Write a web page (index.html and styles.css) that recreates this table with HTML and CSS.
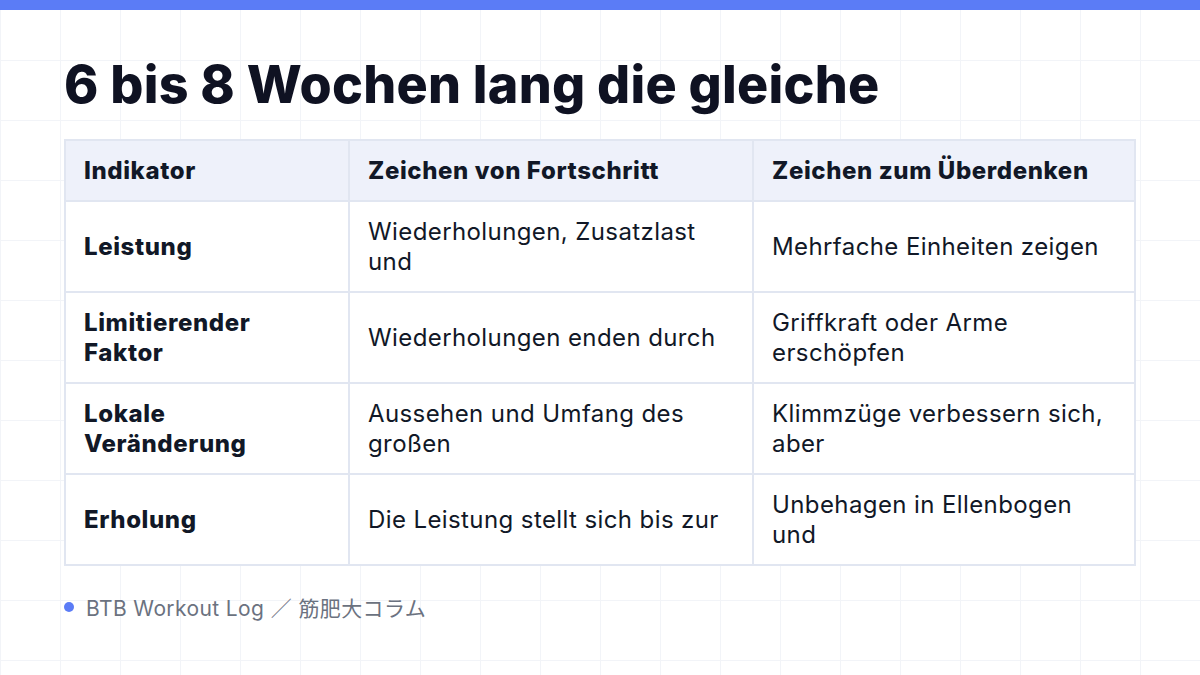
FILE: index.html
```html
<!DOCTYPE html>
<html lang="de">
<head>
<meta charset="utf-8">
<link rel="stylesheet" href="styles.css">
</head>
<body>
<div class="topbar"></div>
<main class="slide">
  <h1 class="title">6 bis 8 Wochen lang die gleiche</h1>
  <table class="grid-table">
    <colgroup>
      <col class="c1"><col class="c2"><col class="c3">
    </colgroup>
    <thead>
      <tr><th>Indikator</th><th>Zeichen von Fortschritt</th><th>Zeichen zum Überdenken</th></tr>
    </thead>
    <tbody>
      <tr><td class="key">Leistung</td><td>Wiederholungen, Zusatzlast und</td><td>Mehrfache Einheiten zeigen</td></tr>
      <tr><td class="key">Limitierender Faktor</td><td>Wiederholungen enden durch</td><td>Griffkraft oder Arme erschöpfen</td></tr>
      <tr><td class="key">Lokale Veränderung</td><td>Aussehen und Umfang des großen</td><td>Klimmzüge verbessern sich, aber</td></tr>
      <tr><td class="key">Erholung</td><td>Die Leistung stellt sich bis zur</td><td>Unbehagen in Ellenbogen und</td></tr>
    </tbody>
  </table>
  <footer class="source"><span class="dot"></span><span>BTB Workout Log ／ 筋肥大コラム</span></footer>
</main>
</body>
</html>
```
FILE: styles.css
```css
html, body {
  margin: 0;
  padding: 0;
}
body {
  width: 1200px;
  height: 675px;
  overflow: hidden;
  font-family: Inter, "Noto Sans CJK JP", sans-serif;
  color: #111827;
  background-color: #ffffff;
  background-image:
    linear-gradient(to right, #f2f4f8 1px, transparent 1px),
    linear-gradient(to bottom, #f2f4f8 1px, transparent 1px);
  background-size: 60px 60px;
  background-position: 0 0;
}
.topbar {
  height: 10px;
  background: #5b7cf6;
}
.slide {
  padding: 0 64px;
}
.title {
  margin: 0;
  padding-top: 43px;
  font-size: 52px;
  line-height: 64px;
  font-weight: 800;
  letter-spacing: 0.25px;
  color: #0f1222;
}
.grid-table {
  margin-top: 22px;
  width: 1070px;
  border-collapse: collapse;
  table-layout: fixed;
  background: #ffffff;
  font-size: 24px;
  line-height: 30px;
  letter-spacing: 0.4px;
}
.c1 { width: 284px; }
.c2 { width: 404px; }
.c3 { width: 382px; }
.grid-table th,
.grid-table td {
  border: 2px solid #e1e6f1;
  padding: 15px 19px 14px 18px;
  text-align: left;
  vertical-align: middle;
}
.grid-table th {
  background: #eef1fa;
  font-weight: 800;
  letter-spacing: 0.6px;
  color: #111827;
}
.grid-table td {
  height: 60px;
  color: #111827;
}
.grid-table td.key {
  font-weight: 800;
  letter-spacing: 0.6px;
}
.source {
  margin-top: 26px;
  display: flex;
  align-items: center;
  gap: 12px;
  font-size: 21px;
  letter-spacing: 0.4px;
  color: #6b7280;
}
.dot {
  width: 10px;
  height: 10px;
  border-radius: 50%;
  background: #5b7cf6;
  flex: none;
}
```
